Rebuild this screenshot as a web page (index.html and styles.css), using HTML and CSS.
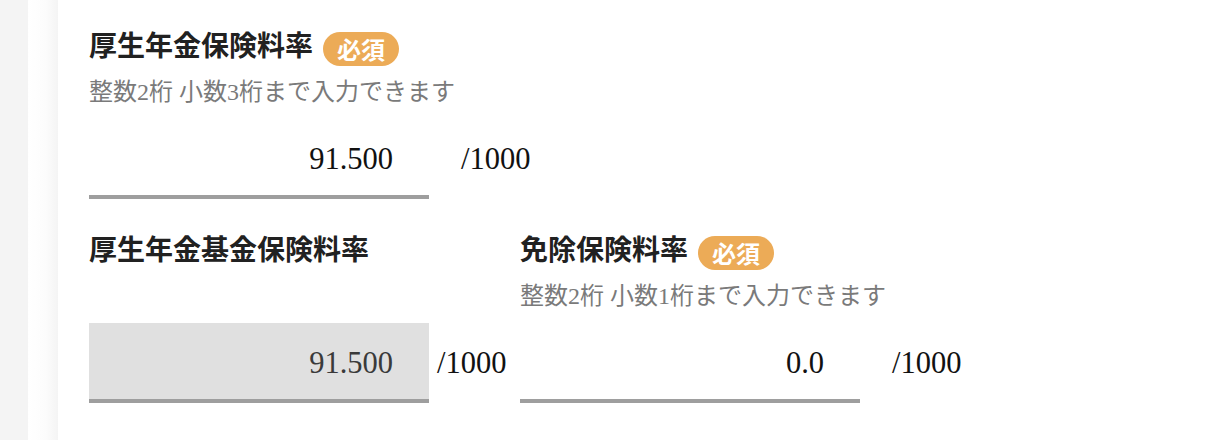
FILE: index.html
```html
<!DOCTYPE html>
<html lang="ja">
<head>
<meta charset="utf-8">
<title>保険料率</title>
<link rel="stylesheet" href="styles.css">
</head>
<body>
<div class="page">
  <div class="side"></div>
  <div class="shade"></div>
  <main class="card">
    <section class="field">
      <div class="field-head">
        <span class="field-title">厚生年金保険料率</span>
        <span class="badge">必須</span>
      </div>
      <p class="hint">整数2桁 小数3桁まで入力できます</p>
      <div class="input-row">
        <input class="rate-input" type="text" value="91.500">
        <span class="unit unit-wide">/1000</span>
      </div>
    </section>
    <div class="field-grid">
      <section class="field">
        <div class="field-head">
          <span class="field-title">厚生年金基金保険料率</span>
        </div>
        <p class="hint"></p>
        <div class="input-row">
          <input class="rate-input" type="text" value="91.500" disabled>
          <span class="unit unit-narrow">/1000</span>
        </div>
      </section>
      <section class="field">
        <div class="field-head">
          <span class="field-title">免除保険料率</span>
          <span class="badge">必須</span>
        </div>
        <p class="hint">整数2桁 小数1桁まで入力できます</p>
        <div class="input-row">
          <input class="rate-input" type="text" value="0.0">
          <span class="unit unit-wide">/1000</span>
        </div>
      </section>
    </div>
  </main>
</div>
</body>
</html>
```

FILE: styles.css
```css
html, body {
  margin: 0;
  padding: 0;
  background: #ffffff;
}

body {
  font-family: "Liberation Serif", "Noto Sans CJK JP", serif;
  color: #212121;
  overflow: hidden;
}

.page {
  display: flex;
  width: 1221px;
  height: 440px;
}

.side {
  width: 28px;
  flex: none;
  background: #f4f4f4;
}

.shade {
  width: 30px;
  flex: none;
  background: linear-gradient(to right, #ffffff 0%, #fcfcfc 60%, #f4f4f4 100%);
}

.card {
  flex: 1;
  background: #ffffff;
  padding: 30px 0 0 31px;
}

.field-head {
  display: flex;
  align-items: flex-start;
  height: 50px;
}

.field-title {
  font-family: "Noto Sans CJK JP", sans-serif;
  font-size: 28px;
  line-height: 28px;
  font-weight: 700;
  color: #212121;
}

.badge {
  margin-left: 10px;
  margin-top: 2px;
  height: 34px;
  line-height: 34px;
  padding: 0 14px;
  border-radius: 17px;
  background: #ecab57;
  color: #ffffff;
  font-family: "Noto Sans CJK JP", sans-serif;
  font-size: 24px;
  font-weight: 700;
}

.hint {
  margin: 0;
  height: 24px;
  font-size: 24px;
  line-height: 24px;
  color: #7a7a7a;
}

.input-row {
  display: flex;
  align-items: flex-start;
  margin-top: 15px;
}

.rate-input {
  width: 340px;
  height: 80px;
  box-sizing: border-box;
  margin: 0;
  border: none;
  border-bottom: 4px solid #9e9e9e;
  border-radius: 0;
  padding: 4px 36px 0 0;
  background: transparent;
  font-family: "Liberation Serif", serif;
  font-size: 30.5px;
  color: #111111;
  text-align: right;
  outline: none;
}

.rate-input:disabled {
  background: #e0e0e0;
  color: #3a3a3a;
  -webkit-text-fill-color: #3a3a3a;
  opacity: 1;
}

.unit {
  height: 76px;
  box-sizing: border-box;
  padding-top: 4px;
  display: flex;
  align-items: center;
  font-size: 30.5px;
  color: #111111;
}

.unit-wide {
  margin-left: 32px;
}

.unit-narrow {
  margin-left: 8px;
}

.field-grid {
  display: grid;
  grid-template-columns: 431px auto;
  margin-top: 35px;
}
```
